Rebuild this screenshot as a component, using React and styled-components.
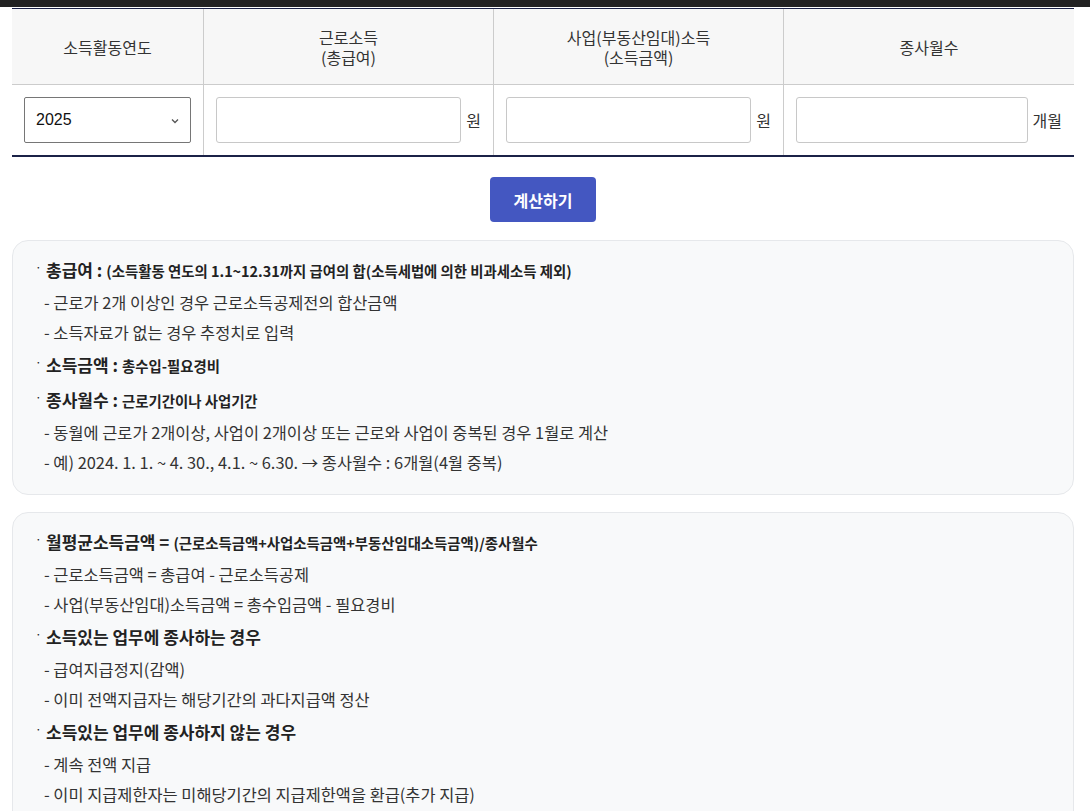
import React from 'react';
import styled, { createGlobalStyle } from 'styled-components';

const GlobalStyle = createGlobalStyle`
  body {
    margin: 0;
    background: #fff;
    font-family: "Noto Sans CJK KR", "Noto Sans", sans-serif;
    color: #222;
  }
`;

const TopStrip = styled.div`
  height: 7px;
  background: #222;
`;

const Page = styled.div`
  padding: 1px 16px 0 12px;
`;

const Table = styled.div`
  display: grid;
  grid-template-columns: 191px 290px 290px 1fr;
  border-top: 1px solid #1b2247;
  border-bottom: 2px solid #1b2247;
`;

const HeadCell = styled.div`
  height: 75px;
  background: #f7f7f7;
  border-bottom: 1px solid #ccc;
  border-left: ${(p) => (p.first ? 'none' : '1px solid #ccc')};
  display: flex;
  flex-direction: column;
  align-items: center;
  justify-content: center;
  text-align: center;
  font-size: 16px;
  color: #333;
`;

const HeadLine = styled.div`
  line-height: 20px;
  height: 20px;
`;

const BodyCell = styled.div`
  height: 70px;
  border-left: ${(p) => (p.first ? 'none' : '1px solid #ccc')};
  display: flex;
  align-items: center;
  gap: 5px;
  padding: 0 12px;
  box-sizing: border-box;
`;

const SelectBox = styled.div`
  position: relative;
  width: 167px;
  height: 46px;
  box-sizing: border-box;
  border: 1px solid #767676;
  border-radius: 2px;
  display: flex;
  align-items: center;
  padding-left: 11px;
  font-family: "Liberation Sans", Arial, sans-serif;
  font-size: 16px;
  color: #111;
`;

const Chevron = styled.svg`
  position: absolute;
  right: 11px;
  top: 20px;
`;

const Field = styled.input`
  flex: 1;
  min-width: 0;
  height: 46px;
  box-sizing: border-box;
  border: 1px solid #c8c8c8;
  border-radius: 3px;
  background: #fff;
  outline: none;
`;

const Unit = styled.span`
  font-size: 16px;
  color: #333;
  white-space: nowrap;
`;

const ButtonRow = styled.div`
  display: flex;
  justify-content: center;
  padding: 20px 0 18px;
`;

const CalcButton = styled.button`
  width: 106px;
  height: 45px;
  border: none;
  border-radius: 4px;
  background: #4457c1;
  color: #fff;
  font-family: "Noto Sans CJK KR", sans-serif;
  font-weight: 700;
  font-size: 16px;
`;

const Card = styled.div`
  background: #f8f9fa;
  border: 1px solid #e6e8eb;
  border-radius: 16px;
  padding: 11px 22px 17px;
  margin-bottom: 17px;
`;

const Title = styled.div`
  display: flex;
  align-items: center;
  height: 30px;
  margin: 3px 0 ${(p) => (p.alone ? '5px' : '2px')};
  font-size: 17px;
  font-weight: 700;
  color: #222;
  white-space: nowrap;

  & > span {
    line-height: 30px;
  }
`;

const Dot = styled.span`
  width: 11px;
  font-size: 12px;
  font-weight: 400;
  position: relative;
  top: -3px;
`;

const Note = styled.span`
  font-size: 14.4px;
  margin-left: 4px;
  position: relative;
  top: 1px;
`;

const Sub = styled.div`
  height: 30px;
  line-height: 30px;
  font-size: 16.4px;
  color: #333;
  padding-left: 9px;
`;

const Item = ({ title, note, subs }) => (
  <>
    <Title alone={!subs}>
      <Dot>·</Dot>
      <span>{title}</span>
      {note && <Note>{note}</Note>}
    </Title>
    {subs && subs.map((s) => <Sub key={s}>- {s}</Sub>)}
  </>
);

export default function App() {
  return (
    <>
      <GlobalStyle />
      <TopStrip />
      <Page>
        <Table>
          <HeadCell first>소득활동연도</HeadCell>
          <HeadCell>
            <HeadLine>근로소득</HeadLine>
            <HeadLine>(총급여)</HeadLine>
          </HeadCell>
          <HeadCell>
            <HeadLine>사업(부동산임대)소득</HeadLine>
            <HeadLine>(소득금액)</HeadLine>
          </HeadCell>
          <HeadCell>종사월수</HeadCell>
          <BodyCell first>
            <SelectBox>
              2025
              <Chevron width="8" height="6" viewBox="0 0 8 6">
                <path d="M1 1.5 L4 4.5 L7 1.5" fill="none" stroke="#555" strokeWidth="1.3" />
              </Chevron>
            </SelectBox>
          </BodyCell>
          <BodyCell>
            <Field />
            <Unit>원</Unit>
          </BodyCell>
          <BodyCell>
            <Field />
            <Unit>원</Unit>
          </BodyCell>
          <BodyCell>
            <Field />
            <Unit>개월</Unit>
          </BodyCell>
        </Table>

        <ButtonRow>
          <CalcButton>계산하기</CalcButton>
        </ButtonRow>

        <Card>
          <Item
            title="총급여 :"
            note="(소득활동 연도의 1.1~12.31까지 급여의 합(소득세법에 의한 비과세소득 제외)"
            subs={['근로가 2개 이상인 경우 근로소득공제전의 합산금액', '소득자료가 없는 경우 추정치로 입력']}
          />
          <Item title="소득금액 :" note="총수입-필요경비" />
          <Item
            title="종사월수 :"
            note="근로기간이나 사업기간"
            subs={[
              '동월에 근로가 2개이상, 사업이 2개이상 또는 근로와 사업이 중복된 경우 1월로 계산',
              '예) 2024. 1. 1. ~ 4. 30., 4.1. ~ 6.30. → 종사월수 : 6개월(4월 중복)',
            ]}
          />
        </Card>

        <Card>
          <Item
            title="월평균소득금액 ="
            note="(근로소득금액+사업소득금액+부동산임대소득금액)/종사월수"
            subs={['근로소득금액 = 총급여 - 근로소득공제', '사업(부동산임대)소득금액 = 총수입금액 - 필요경비']}
          />
          <Item
            title="소득있는 업무에 종사하는 경우"
            subs={['급여지급정지(감액)', '이미 전액지급자는 해당기간의 과다지급액 정산']}
          />
          <Item
            title="소득있는 업무에 종사하지 않는 경우"
            subs={['계속 전액 지급', '이미 지급제한자는 미해당기간의 지급제한액을 환급(추가 지급)']}
          />
        </Card>
      </Page>
    </>
  );
}
